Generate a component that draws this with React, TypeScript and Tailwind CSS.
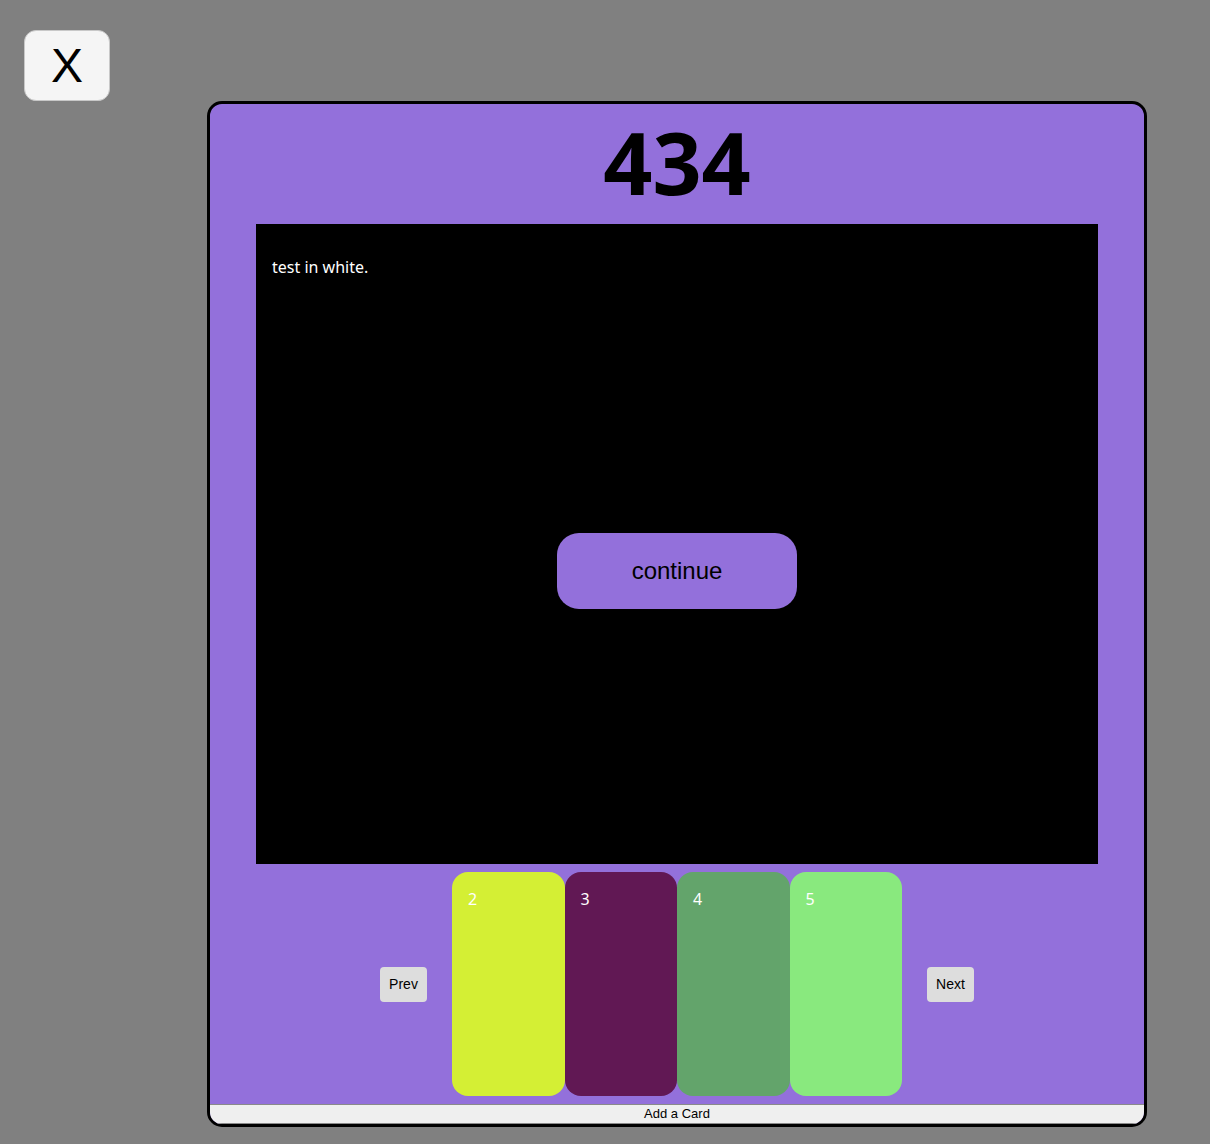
import React, { useState } from 'react';

const cards = [
  { id: 2, color: 'bg-[#d4ef34]' },
  { id: 3, color: 'bg-[#611854]' },
  { id: 4, color: 'bg-[#63a46b]' },
  { id: 5, color: 'bg-[#89e97e]' },
];

const App: React.FC = () => {
  const [page, setPage] = useState(0);

  return (
    <div className="min-h-[1144px] w-full bg-[#808080] pt-[30px] pl-[24px]">
      {/* close button */}
      <button className="flex h-[71px] w-[86px] items-center justify-center rounded-[12px] border border-[#c8c8c8] bg-[#f5f5f5] font-['Liberation_Sans',sans-serif] text-[48px] leading-none text-black">
        X
      </button>

      {/* deck panel */}
      <div className="ml-[183px] flex w-[940px] flex-col overflow-hidden rounded-[15px] border-[3px] border-black bg-[#9370db]">
        <h1 className="pt-[11px] pb-[15px] text-center font-['Noto_Sans',sans-serif] text-[86px] font-bold leading-[94px] text-black">
          434
        </h1>

        <div className="mx-[46px] flex h-[640px] flex-col bg-black px-[16px] pt-[32px]">
          <p className="font-['Noto_Sans',sans-serif] text-[16px] leading-[22px] text-white">test in white.</p>
          <div className="flex flex-1 items-center justify-center">
            <button className="h-[76px] w-[240px] rounded-[22px] bg-[#9370db] font-['Liberation_Sans',sans-serif] text-[24px] text-black">
              continue
            </button>
          </div>
        </div>

        <div className="flex items-center justify-center gap-[25px] py-[8px]">
          <button
            onClick={() => setPage(p => Math.max(0, p - 1))}
            className="h-[35px] w-[47px] rounded-[4px] bg-[#dddddd] font-['Liberation_Sans',sans-serif] text-[14px] text-black"
          >
            Prev
          </button>
          <div className="flex">
            {cards.map(card => (
              <div
                key={card.id}
                className={`h-[224px] w-[112.5px] rounded-[16px] px-[16px] pt-[17px] font-['Noto_Sans',sans-serif] text-[16px] leading-[20px] text-white ${card.color}`}
              >
                {card.id + page}
              </div>
            ))}
          </div>
          <button
            onClick={() => setPage(p => p + 1)}
            className="h-[35px] w-[47px] rounded-[4px] bg-[#dddddd] font-['Liberation_Sans',sans-serif] text-[14px] text-black"
          >
            Next
          </button>
        </div>

        <button className="h-[20px] w-full border-y border-[#8a8a8a] bg-[#efefef] font-['Liberation_Sans',sans-serif] text-[13px] leading-[18px] text-black">
          Add a Card
        </button>
      </div>
    </div>
  );
};

export default App;
